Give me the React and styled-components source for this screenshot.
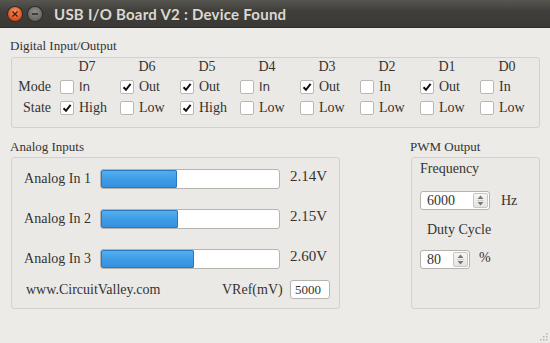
import React from "react";
import styled, { createGlobalStyle } from "styled-components";

const GlobalStyle = createGlobalStyle`
  html, body {
    margin: 0;
    padding: 0;
    background: #edebe7;
  }
`;

// Janela
const Window = styled.div`
  width: 550px;
  height: 343px;
  background: #edebe7;
  display: flex;
  flex-direction: column;
  font-family: "Liberation Serif", "DejaVu Serif", serif;
  font-size: 14px;
  color: #333;
  position: relative;
  overflow: hidden;
`;

const TitleBar = styled.div`
  height: 28px;
  flex-shrink: 0;
  display: flex;
  align-items: center;
  padding-left: 8px;
  gap: 6px;
  background: linear-gradient(#57564f, #403f3b 40%, #3a3935);
  border-bottom: 1px solid #2f2e2b;
  box-sizing: border-box;
`;

const WinButton = styled.div`
  width: 14px;
  height: 14px;
  border-radius: 50%;
  display: flex;
  align-items: center;
  justify-content: center;
  background: ${(p) =>
    p.$close
      ? "radial-gradient(circle at 50% 35%, #f79565, #e2561f 60%, #c4420f)"
      : "radial-gradient(circle at 50% 35%, #8f8e88, #6b6a65 65%, #55544f)"};
  box-shadow: 0 0 0 1px #2e2d2a;
`;

const Title = styled.div`
  margin-left: 6px;
  font-family: "Lato", "Open Sans", sans-serif;
  font-weight: bold;
  font-size: 15px;
  color: #dcd8cf;
  letter-spacing: 0.25px;
`;

const Content = styled.div`
  flex: 1;
  padding: 10px 10px 0 11px;
  display: flex;
  flex-direction: column;
`;

const GroupLabel = styled.div`
  font-size: 13px;
  line-height: 16px;
  height: 16px;
  margin-left: -1px;
  margin-bottom: ${(p) => p.$gap || 3}px;
  white-space: nowrap;
`;

const GroupBox = styled.div`
  box-sizing: border-box;
  width: ${(p) => p.$w}px;
  height: ${(p) => p.$h}px;
  border: 1px solid #d4d1cc;
  border-radius: 3px;
  background: #ebe9e5;
`;

// Digital
const DigitalGrid = styled(GroupBox)`
  display: grid;
  grid-template-columns: 45px repeat(8, 60px);
  grid-template-rows: 18px 21px 21px;
  padding-top: 0px;
  align-items: center;
`;

const RowLabel = styled.div`
  text-align: right;
  padding-right: 6px;
  font-size: 14px;
`;

const ChanLabel = styled.div`
  text-align: center;
  font-size: 14px;
  line-height: 16px;
`;

const CheckCell = styled.label`
  display: flex;
  align-items: center;
  gap: 5px;
  padding-left: 3px;
  font-size: 14px;
  font-family: ${(p) =>
    p.$sans ? '"DejaVu Sans", sans-serif' : '"Liberation Serif", serif'};
  ${(p) => (p.$sans ? "font-size: 12px;" : "")}
`;

const Box = styled.span`
  box-sizing: border-box;
  width: 14px;
  height: 14px;
  background: #fff;
  border: 1px solid #bbb8b3;
  border-radius: 2px;
  display: flex;
  align-items: center;
  justify-content: center;
`;

const Check = ({ on }) => (
  <Box>
    {on && (
      <svg width="10" height="10" viewBox="0 0 10 10">
        <path d="M1.5 5.2 L4 7.8 L8.6 1.8" fill="none" stroke="#111" strokeWidth="2" />
      </svg>
    )}
  </Box>
);

// Analog
const Lower = styled.div`
  display: flex;
  margin-top: 11px;
`;

const Column = styled.div`
  display: flex;
  flex-direction: column;
  margin-left: ${(p) => p.$ml || 0}px;
`;

const AnalogBox = styled(GroupBox)`
  padding-top: 11px;
  display: flex;
  flex-direction: column;
`;

const AnalogRow = styled.div`
  display: flex;
  align-items: center;
  height: 20px;
  margin-bottom: 20px;
`;

const AnalogName = styled.div`
  width: 79px;
  text-align: right;
  margin-right: 9px;
  white-space: nowrap;
`;

const Track = styled.div`
  box-sizing: border-box;
  width: 180px;
  height: 20px;
  background: #fff;
  border: 1px solid #b6b3ae;
  border-radius: 3px;
  overflow: hidden;
  display: flex;
`;

const Fill = styled.div`
  height: 100%;
  background: linear-gradient(#55b0f0, #3d9be6 55%, #3590dd);
  box-shadow: inset 0 0 0 1px #2a78bd;
  border-radius: 2px;
`;

const Value = styled.div`
  margin-left: 10px;
  align-self: flex-start;
  margin-top: -1px;
  line-height: 16px;
  font-size: 15px;
`;

const Footer = styled.div`
  display: flex;
  align-items: center;
  height: 19px;
  margin-top: -9px;
  padding-left: 14px;
`;

const Site = styled.div`
  width: 196px;
  white-space: nowrap;
`;

const VRef = styled.div`
  width: 58px;
  margin-right: 10px;
  text-align: right;
  white-space: nowrap;
`;

const TextField = styled.div`
  box-sizing: border-box;
  width: ${(p) => p.$w}px;
  height: 19px;
  background: #fff;
  border: 1px solid #b6b3ae;
  border-radius: 3px;
  display: flex;
  align-items: center;
  padding-left: 4px;
  font-size: 13px;
`;

// PWM
const PwmBox = styled(GroupBox)`
  padding: 3px 0 0 8px;
  display: flex;
  flex-direction: column;
`;

const PwmLabel = styled.div`
  line-height: 16px;
  margin-left: ${(p) => p.$ml || 0}px;
  margin-top: ${(p) => p.$mt || 0}px;
`;

const SpinRow = styled.div`
  display: flex;
  align-items: center;
  margin-top: ${(p) => p.$mt}px;
`;

const Spin = styled.div`
  box-sizing: border-box;
  width: ${(p) => p.$w}px;
  height: 19px;
  background: #fff;
  border: 1px solid #b6b3ae;
  border-radius: 3px;
  display: flex;
  font-size: 14px;
`;

const SpinText = styled.div`
  flex: 1;
  display: flex;
  align-items: center;
  padding-left: 6px;
`;

const SpinButtons = styled.div`
  width: 13px;
  margin: 1px;
  border: 1px solid #c9c6c1;
  border-radius: 2px;
  background: linear-gradient(#f7f6f4, #e6e4e0);
  display: flex;
  align-items: center;
  justify-content: center;
`;

const Unit = styled.div`
  margin-left: ${(p) => p.$ml}px;
  margin-top: ${(p) => p.$mt || 0}px;
`;

const Arrows = () => (
  <svg width="9" height="13" viewBox="0 0 9 13">
    <path d="M4.5 1.5 L7.5 5 L1.5 5 Z" fill="#777" />
    <path d="M1 6.5 H8" stroke="#d6d3ce" strokeWidth="1" />
    <path d="M1.5 8 L7.5 8 L4.5 11.5 Z" fill="#777" />
  </svg>
);

const Grip = styled.svg`
  position: absolute;
  right: 2px;
  bottom: 2px;
`;

const channels = [
  { name: "D7", mode: false, state: true, sansIn: true },
  { name: "D6", mode: true, state: false },
  { name: "D5", mode: true, state: true },
  { name: "D4", mode: false, state: false, sansIn: true },
  { name: "D3", mode: true, state: false },
  { name: "D2", mode: false, state: false },
  { name: "D1", mode: true, state: false },
  { name: "D0", mode: false, state: false },
];

const analogs = [
  { name: "Analog In 1", v: 2.14 },
  { name: "Analog In 2", v: 2.15 },
  { name: "Analog In 3", v: 2.6 },
];

export default function App() {
  return (
    <Window>
      <GlobalStyle />
      <TitleBar>
        <WinButton $close>
          <svg width="8" height="8" viewBox="0 0 8 8">
            <path d="M1.5 1.5 L6.5 6.5 M6.5 1.5 L1.5 6.5" stroke="#3a2218" strokeWidth="1.4" />
          </svg>
        </WinButton>
        <WinButton>
          <svg width="8" height="8" viewBox="0 0 8 8">
            <path d="M1 4 H7" stroke="#2e2d2a" strokeWidth="1.6" />
          </svg>
        </WinButton>
        <Title>USB I/O Board V2 : Device Found</Title>
      </TitleBar>

      <Content>
        <GroupLabel>Digital Input/Output</GroupLabel>
        <DigitalGrid $w={529} $h={71}>
          <div />
          {channels.map((c) => (
            <ChanLabel key={c.name}>{c.name}</ChanLabel>
          ))}
          <RowLabel>Mode</RowLabel>
          {channels.map((c) => (
            <CheckCell key={c.name} $sans={!c.mode && c.sansIn}>
              <Check on={c.mode} />
              {c.mode ? "Out" : "In"}
            </CheckCell>
          ))}
          <RowLabel>State</RowLabel>
          {channels.map((c) => (
            <CheckCell key={c.name}>
              <Check on={c.state} />
              {c.state ? "High" : "Low"}
            </CheckCell>
          ))}
        </DigitalGrid>

        <Lower>
          <Column>
            <GroupLabel $gap={2}>Analog Inputs</GroupLabel>
            <AnalogBox $w={329} $h={152}>
              {analogs.map((a) => (
                <AnalogRow key={a.name}>
                  <AnalogName>{a.name}</AnalogName>
                  <Track>
                    <Fill style={{ width: `${(a.v / 5) * 100}%` }} />
                  </Track>
                  <Value>{a.v.toFixed(2)}V</Value>
                </AnalogRow>
              ))}
              <Footer>
                <Site>www.CircuitValley.com</Site>
                <VRef>VRef(mV)</VRef>
                <TextField $w={40}>5000</TextField>
              </Footer>
            </AnalogBox>
          </Column>

          <Column $ml={71}>
            <GroupLabel $gap={2}>PWM Output</GroupLabel>
            <PwmBox $w={129} $h={152}>
              <PwmLabel>Frequency</PwmLabel>
              <SpinRow $mt={14}>
                <Spin $w={70}>
                  <SpinText>6000</SpinText>
                  <SpinButtons>
                    <Arrows />
                  </SpinButtons>
                </Spin>
                <Unit $ml={11}>Hz</Unit>
              </SpinRow>
              <PwmLabel $ml={7} $mt={12}>
                Duty Cycle
              </PwmLabel>
              <SpinRow $mt={12}>
                <Spin $w={50}>
                  <SpinText>80</SpinText>
                  <SpinButtons>
                    <Arrows />
                  </SpinButtons>
                </Spin>
                <Unit $ml={9} $mt={-4}>
                  %
                </Unit>
              </SpinRow>
            </PwmBox>
          </Column>
        </Lower>
      </Content>

      <Grip width="8" height="8" viewBox="0 0 8 8">
        {[
          [6, 0],
          [6, 3],
          [3, 3],
          [6, 6],
          [3, 6],
          [0, 6],
        ].map(([x, y]) => (
          <rect key={`${x}-${y}`} x={x} y={y} width="1.5" height="1.5" fill="#b5b2ad" />
        ))}
      </Grip>
    </Window>
  );
}
